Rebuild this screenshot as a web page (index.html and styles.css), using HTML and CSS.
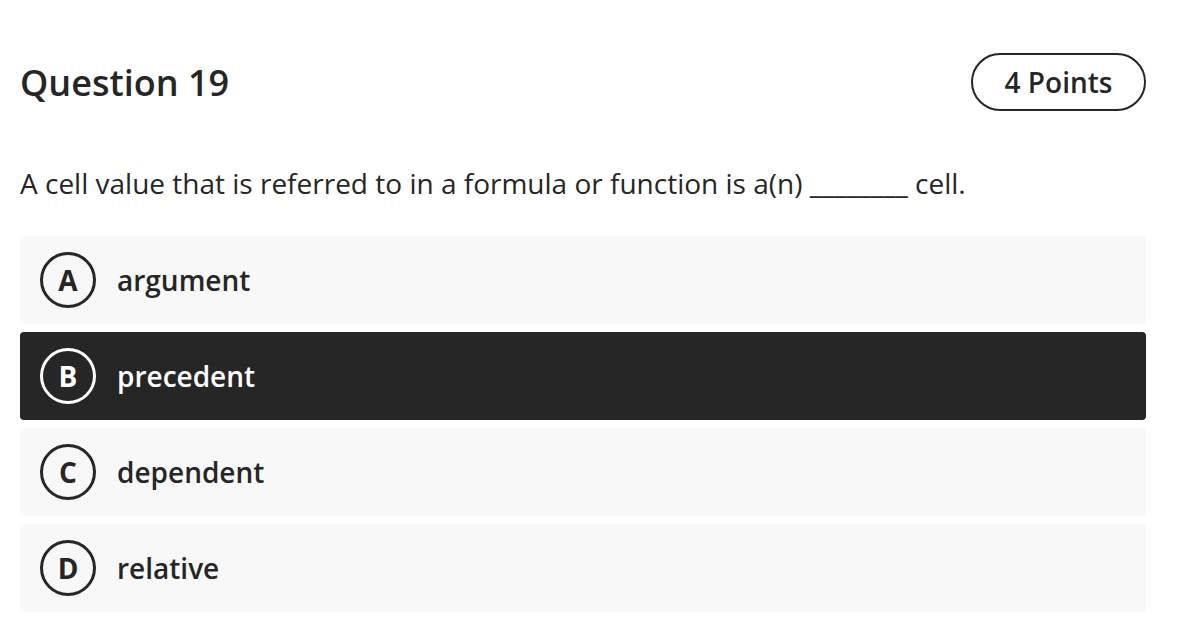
FILE: index.html
```html
<!DOCTYPE html>
<html lang="en">

<head>
    <meta charset="UTF-8">
    <meta name="viewport" content="width=device-width, initial-scale=1.0">
    <title>Question 19</title>
    <link rel="stylesheet" href="styles.css">
</head>

<body>
    <div class="quiz">
        <!-- Question header -->
        <header class="question-header">
            <h1 class="question-title">Question 19</h1>
            <span class="points">4 Points</span>
        </header>

        <p class="question-text">A cell value that is referred to in a formula or function is a(n) ________ cell.</p>

        <!-- Answer options -->
        <ul class="options">
            <li class="option">
                <span class="option-letter">A</span>
                <span class="option-label">argument</span>
            </li>
            <li class="option selected">
                <span class="option-letter">B</span>
                <span class="option-label">precedent</span>
            </li>
            <li class="option">
                <span class="option-letter">C</span>
                <span class="option-label">dependent</span>
            </li>
            <li class="option">
                <span class="option-letter">D</span>
                <span class="option-label">relative</span>
            </li>
        </ul>
    </div>
</body>

</html>
```

FILE: styles.css
```css
/* General Styles */
body {
    font-family: 'Open Sans', 'Noto Sans', sans-serif;
    margin: 0;
    padding: 0;
    background-color: #ffffff;
    color: #262626; /* Near black text */
}

.quiz {
    padding: 53px 40px 0 20px;
}

/* Header */
.question-header {
    display: flex;
    justify-content: space-between;
    align-items: center;
}

.question-title {
    margin: 0;
    font-size: 36px;
    font-weight: 600;
    line-height: 49px;
}

.points {
    display: flex;
    align-items: center;
    justify-content: center;
    box-sizing: border-box;
    width: 175px;
    height: 58px;
    border: 2px solid #262626;
    border-radius: 29px;
    font-size: 28px;
    font-weight: 600;
}

/* Question text */
.question-text {
    margin: 53px 0 34px;
    font-size: 28px;
    line-height: 38px;
}

/* Options list */
.options {
    list-style: none;
    margin: 0;
    padding: 0;
    display: flex;
    flex-direction: column;
    gap: 8px;
}

.option {
    display: flex;
    align-items: center;
    gap: 21px;
    height: 88px;
    box-sizing: border-box;
    padding: 0 20px;
    border-radius: 4px;
    background-color: #f8f8f8; /* Light gray card */
}

.option-letter {
    display: flex;
    align-items: center;
    justify-content: center;
    box-sizing: border-box;
    width: 56px;
    height: 56px;
    border: 3px solid #262626;
    border-radius: 50%;
    font-size: 28px;
    font-weight: 700;
}

.option-label {
    font-size: 28px;
    font-weight: 600;
}

/* Selected answer */
.option.selected {
    background-color: #262626;
    color: #ffffff;
}

.option.selected .option-letter {
    border-color: #ffffff;
}
```
